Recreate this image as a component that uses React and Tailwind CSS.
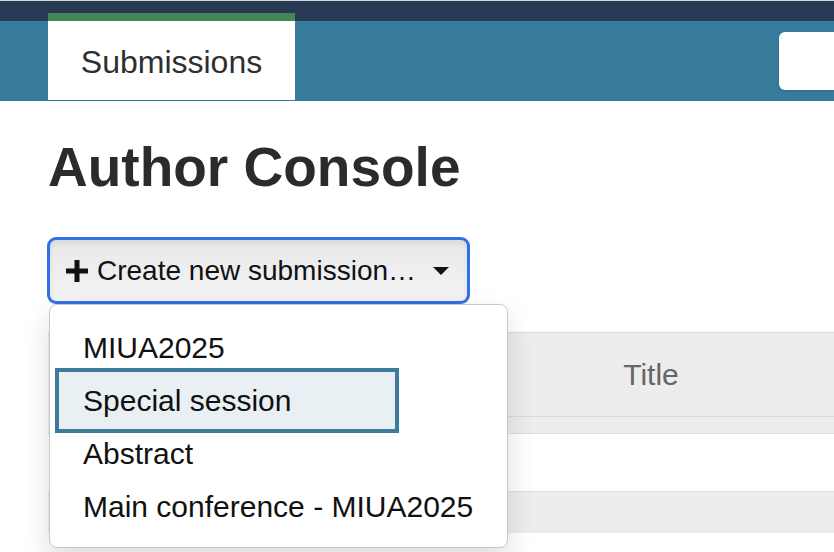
import React from "react";

const menuItems = [
  { label: "MIUA2025" },
  { label: "Special session", active: true },
  { label: "Abstract" },
  { label: "Main conference - MIUA2025" },
];

const PlusIcon = () => (
  <svg width="22" height="22" viewBox="0 0 22 22" className="shrink-0">
    <rect x="0" y="8.5" width="22" height="5" fill="#111" />
    <rect x="8.5" y="0" width="5" height="22" fill="#111" />
  </svg>
);

const Caret = () => (
  <svg width="16" height="8" viewBox="0 0 16 8" className="shrink-0">
    <path d="M0 0 L16 0 L8 8 Z" fill="#111" />
  </svg>
);

const App = () => {
  return (
    <div className="w-[834px] h-[552px] overflow-hidden bg-white font-['Liberation_Sans',Arial,sans-serif]">
      {/* top nav */}
      <div className="border-t border-[#d4d4d4] bg-[linear-gradient(to_bottom,#293a55_20px,#377c9c_20px)] h-[101px] flex items-start">
        <div className="ml-[48px] mt-[12px] w-[247px] h-[87px] bg-white border-t-[8px] border-[#418856] flex items-center justify-center pt-[2px]">
          <span className="text-[32px] text-[#2f2f2f]">Submissions</span>
        </div>
        <div className="ml-auto mt-[31px] w-[55px] h-[58px] bg-white rounded-l-[6px] shadow-[0_1px_3px_rgba(0,0,0,0.15)]"></div>
      </div>

      <div className="pl-[48px]">
        <h1 className="mt-[36px] text-[55px] leading-[61px] font-bold text-[#2b2b2b]">
          Author Console
        </h1>

        <div className="relative mt-[39px] -ml-[1px] w-[423px]">
          <button className="w-[423px] h-[67px] border-[3px] border-[#2f71e6] rounded-[9px] bg-[linear-gradient(to_bottom,#e9e9e9,#f3f3f3)] shadow-[inset_0_4px_6px_rgba(0,0,0,0.07)] flex items-center pl-[16px] pr-[18px]">
            <PlusIcon />
            <span className="ml-[9px] text-[28px] text-[#111] whitespace-nowrap">
              Create new submission…
            </span>
            <span className="ml-auto">
              <Caret />
            </span>
          </button>

          <div className="absolute top-full left-[2px] z-10 w-[459px] h-[244px] bg-white border border-[#c9c9c9] rounded-[8px] shadow-[0_12px_28px_rgba(0,0,0,0.14)] pt-[16px]">
            {menuItems.map((item) => (
              <div
                key={item.label}
                className={
                  item.active
                    ? "ml-[11px] w-[332px] h-[53px] pl-[22px] text-[30px] leading-[53px] text-[#111] whitespace-nowrap bg-[#e8f0f4] outline-[4px] outline-solid outline-[#3b7c9c] outline-offset-[2px] shadow-[0_0_0_2px_#e8f0f4]"
                    : "ml-[11px] w-[332px] h-[53px] pl-[22px] text-[30px] leading-[53px] text-[#111] whitespace-nowrap"
                }
              >
                {item.label}
              </div>
            ))}
          </div>
        </div>

        {/* table behind the menu */}
        <div className="mt-[28px]">
          <div className="h-[85px] bg-[#ededed] border-t border-b border-[#d9dcdf] flex items-center">
            <div className="w-[422px] shrink-0"></div>
            <div className="w-[362px] shrink-0 text-center text-[30px] text-[#666]">Title</div>
          </div>
          <div className="h-[17px] bg-[#ededed] border-b border-[#dde1e5]"></div>
          <div className="h-[58px] bg-white border-b border-[#dde1e5]"></div>
          <div className="h-[41px] bg-[#ededed]"></div>
        </div>
      </div>
    </div>
  );
};

export default App;
